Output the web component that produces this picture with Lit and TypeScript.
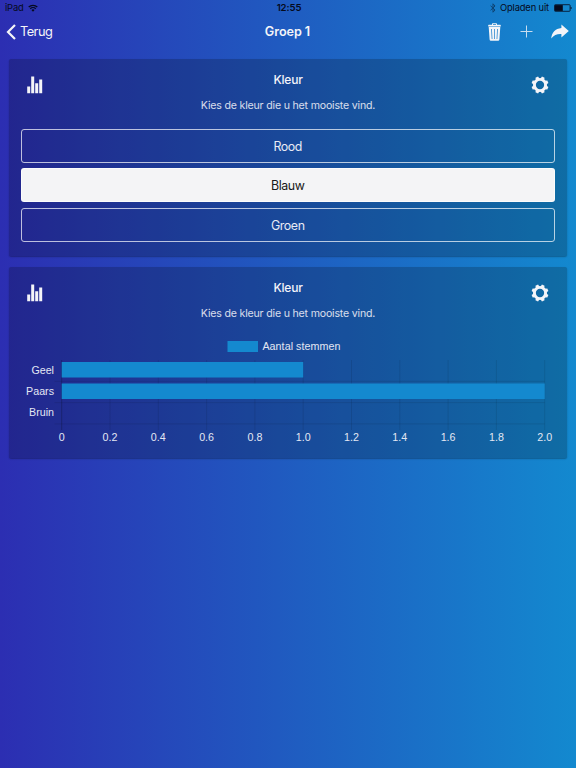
import { LitElement, html, svg, css } from "lit";
import { customElement, property } from "lit/decorators.js";
import { classMap } from "lit/directives/class-map.js";

@customElement("status-bar")
class StatusBar extends LitElement {
  static styles = css`
    :host { display: grid; grid-template-columns: 1fr auto 1fr; align-items: center; height: 16px; padding: 0 4px 0 5px; color: #050a1c; font-size: 9.4px; line-height: 16px; }
    .side { display: flex; align-items: center; }
    .name { letter-spacing: -0.15px; }
    .right { justify-content: flex-end; }
    .time { padding-left: 1px; font-weight: 600; font-size: 9.6px; letter-spacing: -0.1px; }
    .wifi { margin-left: 4px; }
    .bt { margin-right: 4px; opacity: 0.5; }
    .battery { margin-left: 5px; }
    svg { display: block; }
  `;
  render() {
    return html`
      <div class="side">
        <span class="name">iPad</span>
        <svg class="wifi" width="10" height="8" viewBox="0 0 9 7.6" fill="none" stroke="currentColor" stroke-width="1.2">
          <path d="M.4 2.9a5.8 5.8 0 0 1 8.2 0M1.9 4.5a3.7 3.7 0 0 1 5.2 0" />
          <path d="M3 5.8a2.2 2.2 0 0 1 3 0L4.5 7.4z" fill="currentColor" stroke="none" />
        </svg>
      </div>
      <div class="time">12:55</div>
      <div class="side right">
        <svg class="bt" width="6" height="10" viewBox="0 0 6 10" fill="none" stroke="currentColor" stroke-width="1">
          <path d="M.6 2.8 5 7 3 9.2V.8L5 3 .6 7.2" />
        </svg>
        <span class="name">Opladen uit</span>
        <svg class="battery" width="18" height="8" viewBox="0 0 18 8">
          <rect x=".5" y=".7" width="15.6" height="6.6" rx=".8" fill="none" stroke="currentColor" stroke-width=".8" />
          <rect x="1" y="1.1" width="7.8" height="5.8" fill="currentColor" />
          <path d="M16.7 2.8q1 .3 1 1.2t-1 1.2z" fill="currentColor" />
        </svg>
      </div>
    `;
  }
}

@customElement("nav-bar")
class NavBar extends LitElement {
  static styles = css`
    :host { display: grid; grid-template-columns: 1fr auto 1fr; align-items: center; height: 31px; padding: 0 7px 0 6px; color: #f4f4f8; }
    .back { display: flex; align-items: center; gap: 4px; font-size: 12.8px; letter-spacing: -0.55px; }
    .title { font-size: 12.6px; font-weight: 600; letter-spacing: -0.05px; }
    .actions { display: flex; align-items: center; justify-content: flex-end; }
    .plus { margin: 0 18.5px 0 18.5px; opacity: 0.8; }
    svg { display: block; fill: currentColor; }
    .line { fill: none; stroke: currentColor; }
  `;
  render() {
    return html`
      <div class="back">
        <svg class="line" width="10" height="16" viewBox="0 0 10 16" stroke-width="2.2"><path d="M9 1 2 8l7 7" /></svg>
        <span>Terug</span>
      </div>
      <div class="title">Groep 1</div>
      <div class="actions">
        <svg width="13" height="18" viewBox="0 0 13 18">
          <path fill-rule="evenodd" d="M4 1.8V.9Q4 .2 4.7.2h3.6q.7 0 .7.7v.9h3.2q.6 0 .6.7v1H.2v-1q0-.7.6-.7zM5 1.8h3V1H5zM.7 3.9h11.6l-.9 12.6q-.1 1.3-1.3 1.3H2.9q-1.2 0-1.3-1.3zM3.2 6l.5 10h.7L3.9 6zm3 0v10h.7V6zm2.9 0-.5 10h.7l.5-10z" />
        </svg>
        <svg class="line plus" width="13" height="13" viewBox="0 0 13 13" stroke-width="1"><path d="M6.5 .5v12M.5 6.5h12" /></svg>
        <svg width="18" height="15" viewBox="0 0 18 15">
          <path d="M10.4.5 17.8 7 10.4 13.5V10C6 9.8 3 10.8.2 14.6.8 8.6 4.2 4.6 10.4 4z" />
        </svg>
      </div>
    `;
  }
}

@customElement("poll-card")
class PollCard extends LitElement {
  static styles = css`
    :host { display: block; box-sizing: border-box; padding: 12.5px 12.5px 0; background: rgba(0, 0, 0, 0.2); border-radius: 2px; box-shadow: 0 1px 1.5px rgba(0, 0, 0, 0.3); color: #f4f4fa; }
    .head { display: grid; grid-template-columns: 28px 1fr 28px; }
    .icon { display: block; margin-top: 4px; }
    .stats { margin-left: 5.5px; }
    .gear { margin-left: 4.5px; }
    .text { text-align: center; }
    .title { font-size: 12px; font-weight: 500; line-height: 16px; letter-spacing: -0.2px; }
    .sub { margin-top: 10px; font-size: 10.6px; line-height: 16px; letter-spacing: -0.19px; opacity: 0.87; white-space: nowrap; }
  `;
  @property() heading = "";
  @property() question = "";
  render() {
    const teeth = [0, 1, 2, 3, 4, 5, 6, 7];
    return html`
      <div class="head">
        <svg class="icon stats" width="16" height="18" viewBox="0 0 16 18" fill="#f4f4f8">
          <path d="M.2 10.4h3v6.8h-3zM4.2.6h3v16.6h-3zM8.2 7.2h3v10h-3zM12.2 3.4h3v13.8h-3z" />
        </svg>
        <div class="text">
          <div class="title">${this.heading}</div>
          <div class="sub">${this.question}</div>
        </div>
        <svg class="icon gear" width="18" height="18" viewBox="-9 -9 18 18">
          <circle r="5.6" fill="none" stroke="#f4f4f8" stroke-width="2.9" />
          ${teeth.map((i) => svg`<path d="M-2-6-1.4-8.5H1.4L2-6z" fill="#f4f4f8" transform="rotate(${22.5 + i * 45})" />`)}
        </svg>
      </div>
      <slot></slot>
    `;
  }
}

@customElement("poll-options")
class PollOptions extends LitElement {
  static styles = css`
    :host { display: grid; gap: 5.6px; margin: 15px 0 0 -0.5px; }
    .option { box-sizing: border-box; height: 34px; border: 1px solid rgba(255, 255, 255, 0.7); border-radius: 3px; text-align: center; font-size: 12.4px; line-height: 33px; letter-spacing: -0.4px; color: #e8ebf5; }
    .selected { background: #f4f4f6; color: #191919; }
  `;
  @property({ attribute: false }) options: string[] = [];
  @property() selected = "";
  render() {
    return this.options.map((o) => html`<div class=${classMap({ option: true, selected: o === this.selected })}>${o}</div>`);
  }
}

@customElement("vote-chart")
class VoteChart extends LitElement {
  static styles = css`
    :host { display: block; margin: 15px 0 0 -0.5px; }
    svg { display: block; }
    text { font: 10.7px "Liberation Sans", Arial, sans-serif; fill: #e3e7f3; }
    .grid { stroke: rgba(0, 0, 0, 0.09); stroke-width: 1; }
    .axis { stroke: rgba(0, 0, 0, 0.22); }
    .bar { fill: #1489cf; }
    .end { text-anchor: end; }
    .mid { text-anchor: middle; }
  `;
  @property({ attribute: false }) rows: { name: string; votes: number }[] = [];
  render() {
    const x0 = 40.7;
    const step = 48.3;
    const rowH = 21.3;
    const ticks = Array.from({ length: 11 }, (_, i) => i);
    return html`
      <svg width="534" height="112" viewBox="0 0 534 112">
        <rect class="bar" x="206.5" y="4" width="30.5" height="11" />
        <text x="241.4" y="13.4" textLength="78" lengthAdjust="spacing">Aantal stemmen</text>
        ${ticks.map((i) => svg`<path class=${i ? "grid" : "grid axis"} d="M${x0 + i * step} 23v70" />
          <text class="mid" x=${x0 + i * step} y="104.3">${i ? (i / 5).toFixed(1) : "0"}</text>`)}
        ${this.rows.map((r, i) => svg`<path class="grid" d="M33.5 ${23 + (i + 1) * rowH}H523.7" />
          <rect class="bar" x=${x0} y=${25 + i * 21.5} width=${r.votes * step * 5} height="15.5" />
          <text class="end" x="33" y=${36.8 + i * rowH}>${r.name}</text>`)}
      </svg>
    `;
  }
}

@customElement("app-root")
class AppRoot extends LitElement {
  static styles = css`
    :host { display: flex; flex-direction: column; box-sizing: border-box; height: 768px; overflow: hidden; font-family: Inter, "Liberation Sans", sans-serif; background: linear-gradient(90deg, #2c2eb2, #1389cf); }
    main { display: flex; flex-direction: column; gap: 11.5px; padding: 12px 9px 0; }
    .choice { height: 196.5px; }
    .result { height: 190.5px; }
  `;
  render() {
    const question = "Kies de kleur die u het mooiste vind.";
    return html`
      <status-bar></status-bar>
      <nav-bar></nav-bar>
      <main>
        <poll-card class="choice" heading="Kleur" question=${question}>
          <poll-options .options=${["Rood", "Blauw", "Groen"]} selected="Blauw"></poll-options>
        </poll-card>
        <poll-card class="result" heading="Kleur" question=${question}>
          <vote-chart .rows=${[{ name: "Geel", votes: 1 }, { name: "Paars", votes: 2 }, { name: "Bruin", votes: 0 }]}></vote-chart>
        </poll-card>
      </main>
    `;
  }
}
